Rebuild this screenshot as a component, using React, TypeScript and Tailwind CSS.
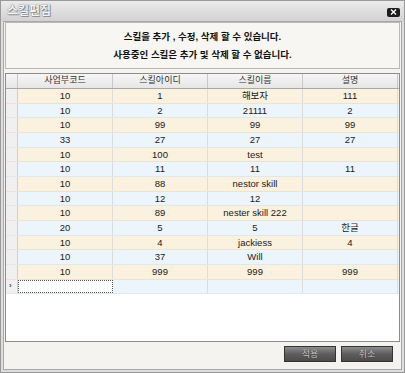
import React from 'react';

const rows: string[][] = [
  ['10', '1', '해보자', '111'],
  ['10', '2', '21111', '2'],
  ['10', '99', '99', '99'],
  ['33', '27', '27', '27'],
  ['10', '100', 'test', ''],
  ['10', '11', '11', '11'],
  ['10', '88', 'nestor skill', ''],
  ['10', '12', '12', ''],
  ['10', '89', 'nester skill 222', ''],
  ['20', '5', '5', '한글'],
  ['10', '4', 'jackiess', '4'],
  ['10', '37', 'Will', ''],
  ['10', '999', '999', '999'],
];

const headers = ['사업부코드', '스킬아이디', '스킬이름', '설명'];

const font = "font-['Liberation_Sans','Noto_Sans_CJK_KR',sans-serif]";

const App = () => {
  return (
    <div className={`w-[405px] h-[373px] flex flex-col border border-[#9a9a9a] bg-[#dedede] ${font}`}>
      {/* title bar */}
      <div className="h-[20px] shrink-0 flex items-center justify-between pl-[6px] pr-[4px] bg-gradient-to-b from-[#ebebeb] to-[#d2d2d2]">
        <span className="text-[12px] font-bold leading-none text-[#f4f4f4] [text-shadow:0_0_1px_#444,1px_1px_0_#999]">
          스킬편집
        </span>
        <div className="w-[13px] h-[9px] mt-[2px] bg-[#1c1c1c] rounded-[2px] flex items-center justify-center">
          <svg width="7" height="6" viewBox="0 0 7 6">
            <path d="M1 0.5 L6 5.5 M6 0.5 L1 5.5" stroke="#fff" strokeWidth="1.4" />
          </svg>
        </div>
      </div>

      {/* body */}
      <div className="flex-1 px-[2px] pb-[2px] flex">
        <div className="flex-1 flex flex-col border border-[#a8a8a8] bg-[#f4f3ef] pl-[1px] pr-[1px]">
          {/* message box */}
          <div className="h-[47px] shrink-0 border border-[#b8b8b8] bg-[#f7f6f2] flex flex-col items-center justify-center gap-[8px] text-[9.5px] font-bold text-[#111] leading-none">
            <div>스킬을 추가 , 수정, 삭제 할 수 있습니다.</div>
            <div>사용중인 스킬은 추가 및 삭제 할 수 없습니다.</div>
          </div>

          {/* grid */}
          <div className="mt-[4px] h-[269px] shrink-0 border border-[#8c8c8c] bg-white text-[9.5px] text-[#1a1a1a]">
            <div className="flex h-[15px] border-b border-[#a8a8a8] bg-gradient-to-b from-[#f6f6f6] to-[#e6e6e6]">
              <div className="w-[12px] border-r border-[#c8c8c8]" />
              {headers.map((h) => (
                <div
                  key={h}
                  className="w-[95px] border-r border-[#c8c8c8] flex items-center justify-center text-[9px] text-[#333]"
                >
                  {h}
                </div>
              ))}
            </div>
            {rows.map((r, i) => (
              <div
                key={i}
                className={`flex h-[14.67px] border-b ${
                  i % 2 === 0 ? 'bg-[#fbf1df] border-[#ede3d0]' : 'bg-[#edf5fc] border-[#dfe8ef]'
                }`}
              >
                <div className="w-[12px] bg-[#f0f0f0] border-r border-[#cfcfcf]" />
                {r.map((c, j) => (
                  <div
                    key={j}
                    className="w-[95px] border-r border-[#dcdcdc] flex items-center justify-center leading-none"
                  >
                    {c}
                  </div>
                ))}
              </div>
            ))}
            <div className="flex h-[14.67px] border-b border-[#dfe8ef] bg-[#edf5fc]">
              <div className="w-[12px] bg-[#f0f0f0] border-r border-[#cfcfcf] flex items-center pl-[3px] text-[8px] font-bold text-[#444] leading-none">
                ›
              </div>
              <div className="w-[95px] bg-white border border-dotted border-[#555]" />
              <div className="w-[95px] border-r border-[#dcdcdc]" />
              <div className="w-[95px] border-r border-[#dcdcdc]" />
              <div className="w-[95px] border-r border-[#dcdcdc]" />
            </div>
          </div>

          {/* buttons */}
          <div className="mt-[4px] flex justify-end gap-[5px] pr-[7px]">
            {['적용', '취소'].map((b) => (
              <button
                key={b}
                className="w-[52px] h-[16px] border border-[#333] bg-gradient-to-b from-[#8e8e8e] via-[#5e5e5e] to-[#4c4c4c] text-[9px] text-[#cfcfcf] leading-none flex items-center justify-center [text-shadow:0_0_1px_#111]"
              >
                {b}
              </button>
            ))}
          </div>
        </div>
      </div>
    </div>
  );
};

export default App;
